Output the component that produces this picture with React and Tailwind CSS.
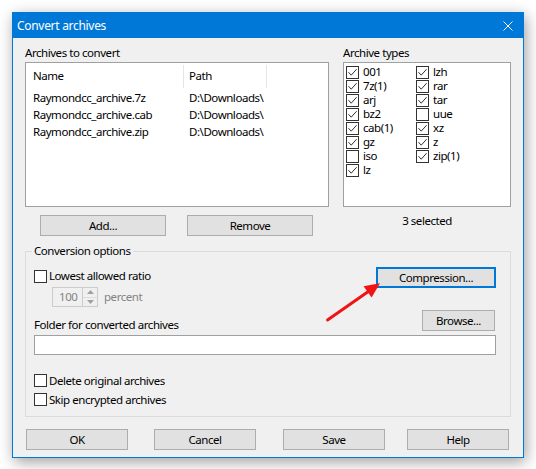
import React from "react";

const Check = ({ checked }) => (
  <span className="w-[13px] h-[13px] border border-[#333333] bg-white flex items-center justify-center shrink-0">
    {checked && (
      <svg width="11" height="11" viewBox="0 0 11 11">
        <path d="M1.5 5.2 L4.2 8.2 L9.6 2.2" fill="none" stroke="#333333" strokeWidth="1" />
      </svg>
    )}
  </span>
);

const Btn = ({ children, className = "" }) => (
  <div className={`h-[21px] bg-[#e1e1e1] border border-[#adadad] flex items-center justify-center ${className}`}>
    {children}
  </div>
);

const files = [
  ["Raymondcc_archive.7z", "D:\\Downloads\\"],
  ["Raymondcc_archive.cab", "D:\\Downloads\\"],
  ["Raymondcc_archive.zip", "D:\\Downloads\\"],
];

const col1 = [
  ["001", true],
  ["7z(1)", true],
  ["arj", true],
  ["bz2", true],
  ["cab(1)", true],
  ["gz", true],
  ["iso", false],
  ["lz", true],
];
const col2 = [
  ["lzh", true],
  ["rar", true],
  ["tar", true],
  ["uue", false],
  ["xz", true],
  ["z", true],
  ["zip(1)", true],
];

const TypeCol = ({ items }) => (
  <div className="w-[70px] flex flex-col">
    {items.map(([n, c]) => (
      <div key={n} className="h-[14px] leading-[14px] flex items-center gap-[4px] whitespace-nowrap">
        <Check checked={c} />
        <span>{n}</span>
      </div>
    ))}
  </div>
);

export default function App() {
  return (
    <div className="w-[536px] h-[469px] bg-white relative overflow-hidden pt-[12px] pl-[12px] font-['Noto_Sans'] text-[11.5px] tracking-[-0.45px] leading-[16px] text-black">
      <div className="w-[512px] h-[446px] border border-[#0078d7] bg-[#f0f0f0] flex flex-col shadow-[2px_4px_14px_rgba(0,0,0,0.38)]">
        {/* title bar */}
        <div className="h-[25px] bg-[#0078d7] flex items-center justify-between pl-[4px] text-white">
          <span className="text-[12px] tracking-[-0.3px]">Convert archives</span>
          <svg width="10" height="10" viewBox="0 0 10 10" className="mr-[10px]">
            <path d="M0.5 0.5 L9.5 9.5 M9.5 0.5 L0.5 9.5" stroke="white" strokeWidth="1" />
          </svg>
        </div>

        {/* client */}
        <div className="flex-1 flex flex-col px-[12px] pt-[7px]">
          <div className="flex gap-[14px]">
            {/* left column */}
            <div className="w-[304px] flex flex-col">
              <div className="h-[16px] mb-[1px]">Archives to convert</div>
              <div className="h-[145px] bg-white border border-[#a0a0a0] flex flex-col">
                <div className="h-[26px] flex items-center">
                  <div className="w-[157px] pl-[7px]">Name</div>
                  <div className="w-px h-[23px] bg-[#e5e5e5]" />
                  <div className="w-[82px] pl-[5px]">Path</div>
                  <div className="w-px h-[23px] bg-[#e5e5e5]" />
                </div>
                {files.map(([n, p]) => (
                  <div key={n} className="h-[17px] flex items-center whitespace-nowrap">
                    <div className="w-[158px] pl-[7px] overflow-hidden">{n}</div>
                    <div className="w-[82px] pl-[5px] overflow-hidden">{p}</div>
                  </div>
                ))}
              </div>
              <div className="flex mt-[8px] pl-[15px] gap-[21px]">
                <Btn className="w-[126px]">Add...</Btn>
                <Btn className="w-[126px]">Remove</Btn>
              </div>
            </div>

            {/* right column */}
            <div className="w-[168px] flex flex-col">
              <div className="h-[16px] mb-[1px]">Archive types</div>
              <div className="h-[145px] bg-white border border-[#a0a0a0] flex pt-[2px] pl-[2px]">
                <TypeCol items={col1} />
                <TypeCol items={col2} />
              </div>
              <div className="mt-[6px] text-center">3 selected</div>
            </div>
          </div>

          {/* conversion options */}
          <fieldset className="mt-[7px] border border-[#dcdcdc] pl-[8px] pr-[14px] pb-[7px] flex flex-col">
            <legend className="-ml-[2px] px-[2px] leading-[16px]">Conversion options</legend>
            <div className="mt-[8px] flex justify-between items-start">
              <div className="mt-[1px] h-[16px] flex items-center gap-[2px]">
                <Check checked={false} />
                <span>Lowest allowed ratio</span>
              </div>
              <div className="w-[120px] h-[21px] bg-[#e1e1e1] border-2 border-[#0078d7] flex items-center justify-center">
                Compression...
              </div>
            </div>
            <div className="-mt-[1px] ml-[18px] flex items-center">
              <div className="w-[46px] h-[20px] border border-[#cccccc] flex">
                <div className="flex-1 pl-[6px] flex items-center text-[#838383]">100</div>
                <div className="w-[15px] border-l border-[#cccccc] flex flex-col">
                  <div className="flex-1 flex items-center justify-center border-b border-[#dddddd]">
                    <svg width="7" height="4" viewBox="0 0 7 4">
                      <path d="M0 4 L3.5 0 L7 4 Z" fill="#a0a0a0" />
                    </svg>
                  </div>
                  <div className="flex-1 flex items-center justify-center">
                    <svg width="7" height="4" viewBox="0 0 7 4">
                      <path d="M0 0 L3.5 4 L7 0 Z" fill="#a0a0a0" />
                    </svg>
                  </div>
                </div>
              </div>
              <span className="ml-[6px] text-[#838383]">percent</span>
            </div>
            <div className="mt-[3px] flex justify-between items-end">
              <span>Folder for converted archives</span>
              <Btn className="w-[73px] mb-[2px] mr-[1px]">Browse...</Btn>
            </div>
            <div className="mt-[2px] h-[20px] bg-white border border-[#a0a0a0]" />
            <div className="mt-[16px] h-[19px] flex items-center gap-[2px]">
              <Check checked={false} />
              <span>Delete original archives</span>
            </div>
            <div className="h-[19px] flex items-center gap-[2px]">
              <Check checked={false} />
              <span>Skip encrypted archives</span>
            </div>
          </fieldset>

          {/* bottom buttons */}
          <div className="mt-[12px] flex">
            <Btn className="w-[102px] ml-[1px]">OK</Btn>
            <Btn className="w-[102px] ml-[26px]">Cancel</Btn>
            <Btn className="w-[102px] ml-[27px]">Save</Btn>
            <Btn className="w-[102px] ml-[22px]">Help</Btn>
          </div>
        </div>
      </div>

      {/* red annotation arrow */}
      <svg className="absolute left-0 top-0 pointer-events-none" width="536" height="469" viewBox="0 0 536 469">
        <line x1="327.5" y1="320" x2="368" y2="291.8" stroke="#f01414" strokeWidth="3" strokeLinecap="round" />
        <polygon points="380,283.3 371.6,297.5 363.6,286.2" fill="#f01414" />
      </svg>
    </div>
  );
}
